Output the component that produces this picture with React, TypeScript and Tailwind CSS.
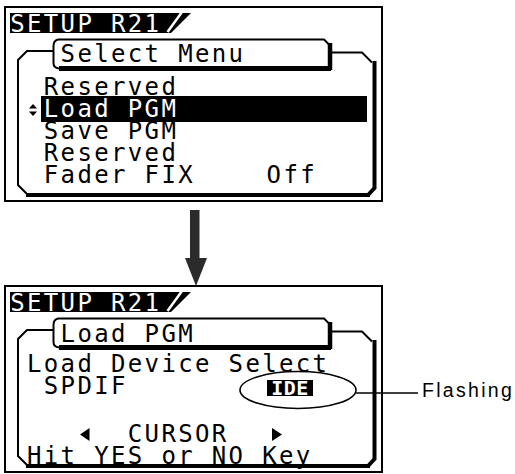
import React from "react";

const MONO =
  "font-['DejaVu_Sans_Mono',monospace] text-[24px] leading-[22px] tracking-[2.35px] whitespace-pre";

function Frame({ h }: { h: number }) {
  const fb = h - 7;
  return (
    <svg
      className="absolute -left-[2px] -top-[2px]"
      width={379}
      height={h}
      viewBox={`0 0 379 ${h}`}
      fill="none"
    >
      <polygon points="6,7 187,7 167,27 6,27" fill="#000" />
      <line x1="178" y1="6" x2="163.5" y2="26" stroke="#fff" strokeWidth="2.5" />
      <path d="M54 33.5 H320 L326 39.5" stroke="#000" strokeWidth="2" />
      <path d="M54 33.5 Q49.5 34.5 49.5 40 V57 Q49.5 62 55 62.5" stroke="#000" strokeWidth="2" />
      <line x1="326" y1="37" x2="326" y2="64" stroke="#000" strokeWidth="4.5" />
      <line x1="55" y1="62.5" x2="327" y2="62.5" stroke="#000" strokeWidth="5" />
      <path d={`M49 45 H23 L14 54 V${h - 17} L23 ${fb - 1}`} stroke="#000" strokeWidth="2" />
      <line x1="22" y1={fb} x2="366" y2={fb} stroke="#000" strokeWidth="4" />
      <path d="M328 46.5 H358 L368 56.5" stroke="#000" strokeWidth="2" />
      <path d={`M370.5 55 V${h - 14} L364 ${fb}`} stroke="#000" strokeWidth="4" />
    </svg>
  );
}

function UpDown() {
  return (
    <svg width="10" height="14" viewBox="0 0 10 14" className="mt-[5px] ml-[1px]">
      <polygon points="1,5.5 5,1 9,5.5" fill="#000" />
      <polygon points="1,8.5 9,8.5 5,13" fill="#000" />
    </svg>
  );
}

function TriLeft() {
  return (
    <svg width="16.8" height="22" viewBox="0 0 16.8 22" className="shrink-0">
      <polygon points="3,11.5 12.5,5 12.5,18" fill="#000" />
    </svg>
  );
}

function TriRight() {
  return (
    <svg width="24" height="22" viewBox="0 0 24 22" className="shrink-0">
      <polygon points="10,5 10,18 20,11.5" fill="#000" />
    </svg>
  );
}

export default function App() {
  return (
    <div className="w-[515px] h-[474px] bg-white overflow-hidden flex flex-col">
      {/* Top LCD panel */}
      <div className="mt-[6px] ml-[4px] w-[379px] h-[196px] border-2 border-black relative shrink-0">
        <Frame h={196} />
        <div className={`${MONO} relative pl-[21px] flex flex-col text-black`}>
          <div className="mt-[5px] -ml-[16.8px] text-white">SETUP R21</div>
          <div className="mt-[8px] ml-[33.6px]">Select Menu</div>
          <div className="mt-[11px]"> Reserved</div>
          <div className="flex">
            <div className="w-[14px]">
              <UpDown />
            </div>
            <div className="flex-1 mr-[14px] bg-black text-white -my-[2px] py-[2px] pl-[2.8px]">Load PGM</div>
          </div>
          <div> Save PGM</div>
          <div> Reserved</div>
          <div className="flex justify-between w-[290px]">
            <span> Fader FIX</span>
            <span>Off</span>
          </div>
        </div>
      </div>

      {/* Arrow */}
      <svg width="22" height="83" viewBox="0 0 22 83" className="ml-[185px] shrink-0">
        <rect x="5" y="8" width="9.5" height="50" fill="#2b2b2b" />
        <polygon points="0,56 22,56 11,84" fill="#2b2b2b" />
      </svg>

      {/* Bottom section */}
      <div className="flex items-start ml-[4px]">
        <div className="w-[379px] h-[188px] border-2 border-black relative shrink-0">
          <Frame h={188} />
          <div className={`${MONO} relative pl-[21px] flex flex-col text-black`}>
            <div className="mt-[5px] -ml-[16.8px] text-white">SETUP R21</div>
            <div className="mt-[9px] ml-[33.6px]">Load PGM</div>
            <div className="mt-[8px]">Load Device Select</div>
            <div className="flex justify-between items-start w-[286px]">
              <span> SPDIF</span>
              <span className="mt-[5px] h-[16px] w-[46px] bg-black text-white font-bold text-[20px] leading-[16px] tracking-[0.5px] text-center">
                IDE
              </span>
            </div>
            <div className="h-[22px]" />
            <div className="mt-[4px] flex">
              <span>   </span>
              <TriLeft />
              <span>  CURSOR  </span>
              <TriRight />
            </div>
            <div>Hit YES or NO Key</div>
          </div>
          <svg
            className="absolute -left-[2px] -top-[2px] overflow-visible"
            width={420}
            height={188}
            viewBox="0 0 420 188"
            fill="none"
          >
            <ellipse cx="294" cy="105" rx="58" ry="18.5" stroke="#000" strokeWidth="1.6" />
            <line x1="352" y1="108" x2="414" y2="108" stroke="#000" strokeWidth="1.6" />
          </svg>
        </div>
        <div className="ml-[39px] mt-[95px] font-['Liberation_Sans',Arial,sans-serif] text-[19.5px] leading-[20px] tracking-[2.3px] text-black">
          Flashing
        </div>
      </div>
    </div>
  );
}
